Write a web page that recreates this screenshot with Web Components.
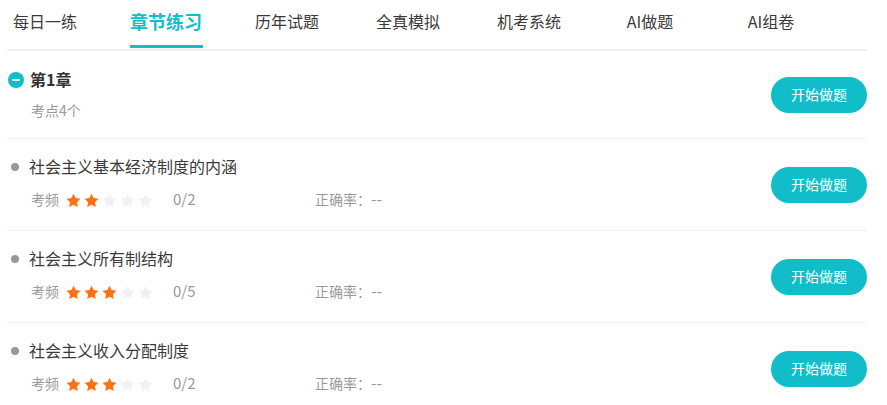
<!DOCTYPE html>
<html lang="zh"><head><meta charset="utf-8">
<style>
html,body{margin:0;padding:0;background:#fff;overflow:hidden}
body{font-family:"Noto Sans CJK SC","Liberation Sans",sans-serif;width:887px;height:405px}
main{display:block;padding:0 20px 0 7px;overflow:hidden;height:405px}
</style></head><body>
<template id="t-tabs"><style>
:host{display:flex;height:51px;box-sizing:border-box;border-bottom:2px solid #eef0f1}
.w{display:grid;grid-template-columns:repeat(7,121px);margin-left:-22.5px}
</style><div class="w"><slot></slot></div></template>
<template id="t-tab"><style>
:host{display:flex;justify-content:center;height:49px;font-size:16px;color:#3a3a3a}
span{display:block;height:48px;box-sizing:border-box;line-height:42px;white-space:nowrap}
:host([active]) {font-size:18px;font-weight:700;color:#16bcc8}
:host([active]) span{border-bottom:3px solid #13bcc8;width:73px;text-align:center}
</style><span><slot></slot></span></template>
<template id="t-row"><style>
:host{display:flex;align-items:center;justify-content:space-between;height:92px;box-sizing:border-box;border-bottom:1px solid #eff1f2}
:host([chapter]){height:88px}
</style><div><slot></slot></div><start-btn>开始做题</start-btn></template>
<template id="t-btn"><style>
:host{display:flex;align-items:center;justify-content:center;width:96px;height:36px;box-sizing:border-box;padding-bottom:2px;border-radius:18px;background:#11bdc8;color:#fff;font-size:14px}
</style><slot></slot></template>
<template id="t-chapter"><style>
:host{display:block}
.h{display:flex;align-items:center;gap:6px;font-size:16px;font-weight:700;color:#333;margin-left:1px}
.h span{display:block;line-height:22px;padding-bottom:2px}
.s{font-size:14px;color:#999;line-height:20px;margin:8px 0 2px 24px}
svg{display:block}
</style><div class="h"><svg width="16" height="16" viewBox="0 0 16 16"><circle cx="8" cy="8" r="8" fill="#11bdc8"/><rect x="4" y="7" width="8" height="2" rx="1" fill="#fff"/></svg><span><slot></slot></span></div><div class="s"><slot name="sub"></slot></div></template>
<template id="t-point"><style>
:host{display:block}
.h{display:flex;align-items:center;gap:10px;font-size:16px;color:#3a3a3a;margin-left:4px}
.h span{display:block;line-height:18px;padding-bottom:4px}
i{width:8px;height:8px;border-radius:50%;background:#999;margin-top:-3px}
.m{display:flex;align-items:center;margin:10px 0 0 24px;font-size:14px;color:#999}
.t{display:block;line-height:18px;padding-bottom:4px}
.st{display:flex;gap:3px;margin-left:7px;width:107px}
svg{display:block}
.c{width:142px;font-size:15px}
.d{font-size:16px}
</style><div class="h"><i></i><span><slot></slot></span></div><div class="m"><span class="t">考频</span><span class="st" id="st"></span><span class="t c" id="c"></span><span class="t">正确率：<span class="d">--</span></span></div></template>
<main>
<tab-bar><tab-item>每日一练</tab-item><tab-item active>章节练习</tab-item><tab-item>历年试题</tab-item><tab-item>全真模拟</tab-item><tab-item>机考系统</tab-item><tab-item>AI做题</tab-item><tab-item>AI组卷</tab-item></tab-bar>
<list-row chapter><chapter-head>第1章<span slot="sub">考点4个</span></chapter-head></list-row>
<list-row><point-info stars="2" count="0/2">社会主义基本经济制度的内涵</point-info></list-row>
<list-row><point-info stars="3" count="0/5">社会主义所有制结构</point-info></list-row>
<list-row><point-info stars="3" count="0/2">社会主义收入分配制度</point-info></list-row>
</main>
<script>
function def(n,t,f){customElements.define(n,class extends HTMLElement{constructor(){super();this.attachShadow({mode:'open'}).append(document.getElementById(t).content.cloneNode(true));}connectedCallback(){f&&f(this)}})}
def('tab-bar','t-tabs');def('tab-item','t-tab');def('list-row','t-row');def('start-btn','t-btn');def('chapter-head','t-chapter');
def('point-info','t-point',e=>{const n=+e.getAttribute('stars');let h='';for(let i=0;i<5;i++){h+=`<svg width="15" height="15" viewBox="0 0 24 24"><path fill="${i<n?'#ff7214':'#eef2f7'}" d="M12 1l3.400 7.100 7.800 1.100-5.700 5.400 1.400 7.800L12 18.700l-6.900 3.700 1.400-7.800L.8 9.200l7.800-1.100z"/></svg>`}
e.shadowRoot.getElementById('st').innerHTML=h;e.shadowRoot.getElementById('c').textContent=e.getAttribute('count')});
</script>
</body></html>
